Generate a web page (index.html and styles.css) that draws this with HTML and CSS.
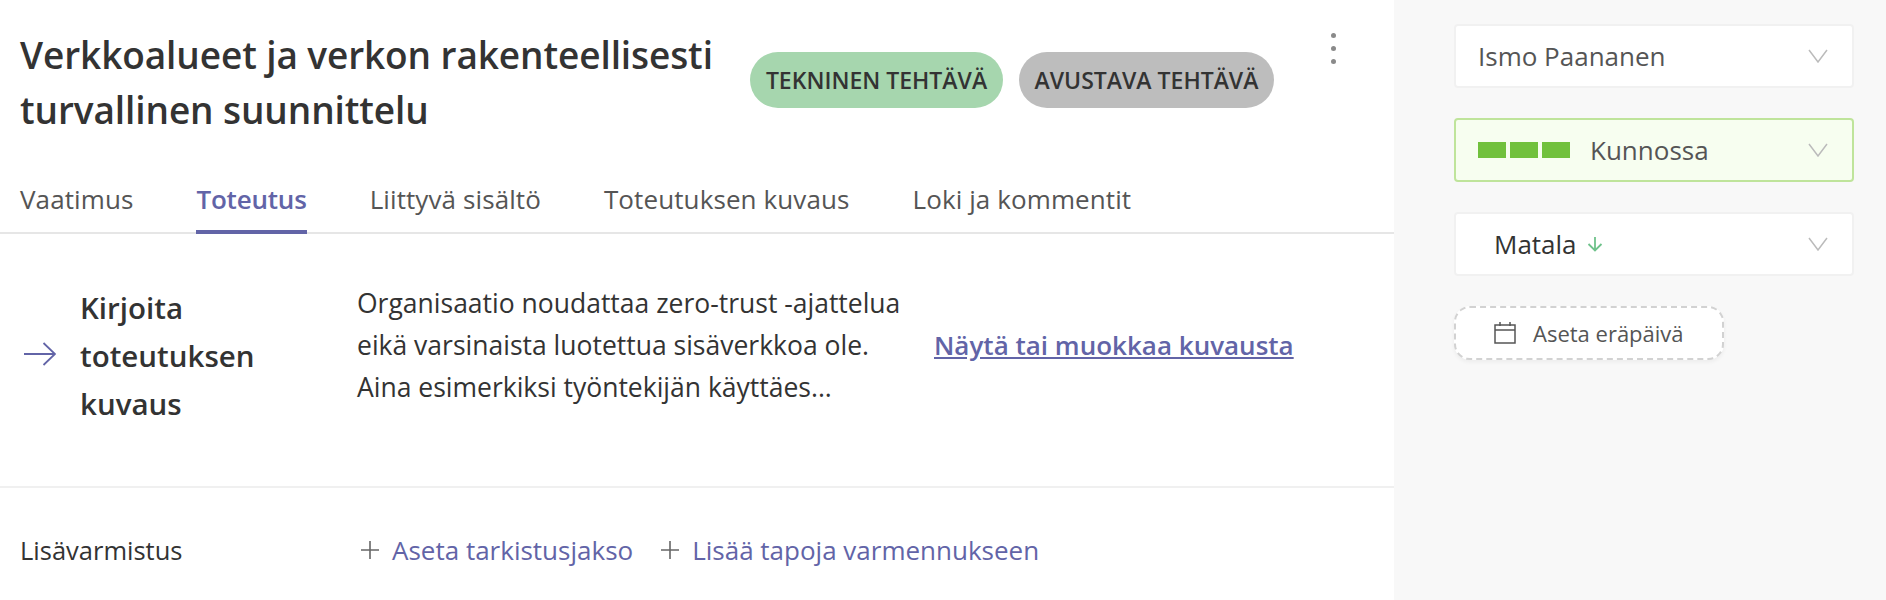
FILE: index.html
```html
<!DOCTYPE html>
<html lang="fi">
<head>
  <meta charset="UTF-8">
  <title>Verkkoalueet ja verkon rakenteellisesti turvallinen suunnittelu</title>
  <link rel="stylesheet" href="styles.css">
</head>
<body>

  <div class="page">
    <div class="main">

      <!-- Otsikko -->
      <div class="header">
        <h1 class="title">Verkkoalueet ja verkon rakenteellisesti turvallinen suunnittelu</h1>
        <div class="chips">
          <span class="chip chip-green">TEKNINEN TEHTÄVÄ</span>
          <span class="chip chip-gray">AVUSTAVA TEHTÄVÄ</span>
        </div>
        <div class="more"><i></i><i></i><i></i></div>
      </div>

      <!-- Välilehdet -->
      <div class="tabs">
        <div class="tab">Vaatimus</div>
        <div class="tab active">Toteutus</div>
        <div class="tab">Liittyvä sisältö</div>
        <div class="tab">Toteutuksen kuvaus</div>
        <div class="tab">Loki ja kommentit</div>
      </div>

      <!-- Kuvaus -->
      <div class="describe">
        <svg class="arrow" width="32" height="24" viewBox="0 0 32 24" fill="none" stroke="#6264a7" stroke-width="1.8">
          <path d="M0 12H31M19.5 1l11.5 11-11.5 11"/>
        </svg>
        <div class="describe-title">Kirjoita toteutuksen kuvaus</div>
        <p class="describe-text">Organisaatio noudattaa zero-trust -ajattelua eikä varsinaista luotettua sisäverkkoa ole. Aina esimerkiksi työntekijän käyttäes...</p>
        <a class="describe-link" href="#">Näytä tai muokkaa kuvausta</a>
      </div>

      <!-- Lisävarmistus -->
      <div class="extra">
        <div class="extra-label">Lisävarmistus</div>
        <div class="extra-actions">
          <span class="add">
            <svg width="20" height="20" viewBox="0 0 20 20" stroke="#666" stroke-width="1.6"><path d="M10 1v18M1 10h18"/></svg>
            Aseta tarkistusjakso
          </span>
          <span class="add">
            <svg width="20" height="20" viewBox="0 0 20 20" stroke="#666" stroke-width="1.6"><path d="M10 1v18M1 10h18"/></svg>
            Lisää tapoja varmennukseen
          </span>
        </div>
      </div>
    </div>

    <!-- Sivupalkki -->
    <div class="side">
      <div class="select">
        <span class="select-value">Ismo Paananen</span>
        <svg class="chevron" width="20" height="14" viewBox="0 0 20 14" fill="none" stroke="#bbb" stroke-width="1.5"><path d="M1 1l9 12 9-12"/></svg>
      </div>
      <div class="select select-ok">
        <span class="bars"><i></i><i></i><i></i></span>
        <span class="select-value">Kunnossa</span>
        <svg class="chevron" width="20" height="14" viewBox="0 0 20 14" fill="none" stroke="#bbb" stroke-width="1.5"><path d="M1 1l9 12 9-12"/></svg>
      </div>
      <div class="select select-low">
        <span class="select-value">Matala</span>
        <svg class="down" width="16" height="16" viewBox="0 0 16 16" fill="none" stroke="#6fc28b" stroke-width="1.8"><path d="M8 1v13M1.5 8L8 14.5 14.5 8"/></svg>
        <svg class="chevron" width="20" height="14" viewBox="0 0 20 14" fill="none" stroke="#bbb" stroke-width="1.5"><path d="M1 1l9 12 9-12"/></svg>
      </div>
      <div class="due">
        <svg width="22" height="22" viewBox="0 0 22 22" fill="none" stroke="#555" stroke-width="1.5"><path d="M1 3h20v18H1zM1 8h20M6 0v4M16 0v4"/></svg>
        Aseta eräpäivä
      </div>
    </div>
  </div>

</body>
</html>
```

FILE: styles.css
```css
body {
  margin: 0;
  font-family: "Open Sans", sans-serif;
  color: #333;
  background-color: #fff;
}

.page {
  display: flex;
  height: 600px;
  overflow: hidden;
}

.main {
  width: 1394px;
  flex-shrink: 0;
}

.header {
  display: flex;
  align-items: flex-start;
  height: 158px;
  padding: 27px 0 0 20px;
  box-sizing: border-box;
}

.title {
  width: 730px;
  margin: 0;
  font-size: 37px;
  line-height: 55px;
  font-weight: 600;
  letter-spacing: -0.1px;
}

.chips {
  display: flex;
  gap: 16px;
  margin-top: 25px;
}

.chip {
  display: flex;
  align-items: center;
  justify-content: center;
  height: 56px;
  border-radius: 28px;
  font-size: 23px;
  font-weight: 600;
}

.chip-green {
  width: 253px;
  background-color: #a6d6ae;
}

.chip-gray {
  width: 255px;
  background-color: #bdbdbd;
}

.more {
  display: flex;
  flex-direction: column;
  gap: 8px;
  margin: 6px 0 0 57px;
}

.more i {
  width: 5px;
  height: 5px;
  border-radius: 50%;
  background-color: #8a8a8a;
}

.tabs {
  display: flex;
  gap: 63px;
  height: 74px;
  padding-left: 20px;
  border-bottom: 2px solid #e6e6e6;
}

.tab {
  height: 74px;
  line-height: 82px;
  font-size: 26px;
  letter-spacing: 0.1px;
  color: #555;
  box-sizing: border-box;
}

.tab.active {
  height: 76px;
  color: #6264a7;
  font-weight: 600;
  letter-spacing: -0.2px;
  border-bottom: 4px solid #6264a7;
}

.describe {
  display: flex;
  align-items: flex-start;
  height: 254px;
  padding: 48px 0 0 24px;
  box-sizing: border-box;
  border-bottom: 2px solid #f0f0f0;
}

.arrow {
  flex-shrink: 0;
  margin-top: 60px;
}

.describe-title {
  width: 277px;
  margin: 2px 0 0 24px;
  font-size: 29.5px;
  line-height: 48px;
  font-weight: 600;
}

.describe-text {
  width: 560px;
  margin: 0 17px 0 0;
  font-size: 26.5px;
  line-height: 42px;
}

.describe-link {
  margin-top: 45px;
  font-size: 26px;
  line-height: 36px;
  font-weight: 600;
  color: #6264a7;
}

.extra {
  display: flex;
  align-items: center;
  height: 124px;
  padding-left: 20px;
}

.extra-label {
  width: 340px;
  font-size: 25.5px;
}

.extra-actions {
  display: flex;
  gap: 27px;
}

.add {
  display: flex;
  align-items: center;
  gap: 12px;
  font-size: 26px;
  color: #6264a7;
}

.side {
  flex: 1;
  display: flex;
  flex-direction: column;
  gap: 30px;
  padding: 24px 32px 0 60px;
  background-color: #f8f8f8;
}

.select {
  display: flex;
  align-items: center;
  height: 64px;
  padding: 0 24px 0 22px;
  box-sizing: border-box;
  background-color: #fff;
  border: 2px solid #f1f1f1;
  border-radius: 4px;
}

.select-value {
  font-size: 26px;
  color: #555;
}

.chevron {
  margin-left: auto;
}

.select-ok {
  background-color: #f7fef0;
  border-color: #bfe49b;
}

.bars {
  display: flex;
  gap: 4px;
  margin-right: 20px;
}

.bars i {
  width: 28px;
  height: 16px;
  background-color: #71c13d;
}

.select-low {
  padding-left: 38px;
}

.select-low .select-value {
  color: #333;
}

.down {
  margin-left: 10px;
}

.due {
  display: flex;
  align-items: center;
  gap: 17px;
  width: 270px;
  height: 54px;
  padding-left: 38px;
  box-sizing: border-box;
  background-color: #fff;
  border: 2px dashed #d2d2d2;
  border-radius: 16px;
  box-shadow: 0 2px 4px rgba(0, 0, 0, 0.05);
  font-size: 22px;
  color: #555;
}
```
